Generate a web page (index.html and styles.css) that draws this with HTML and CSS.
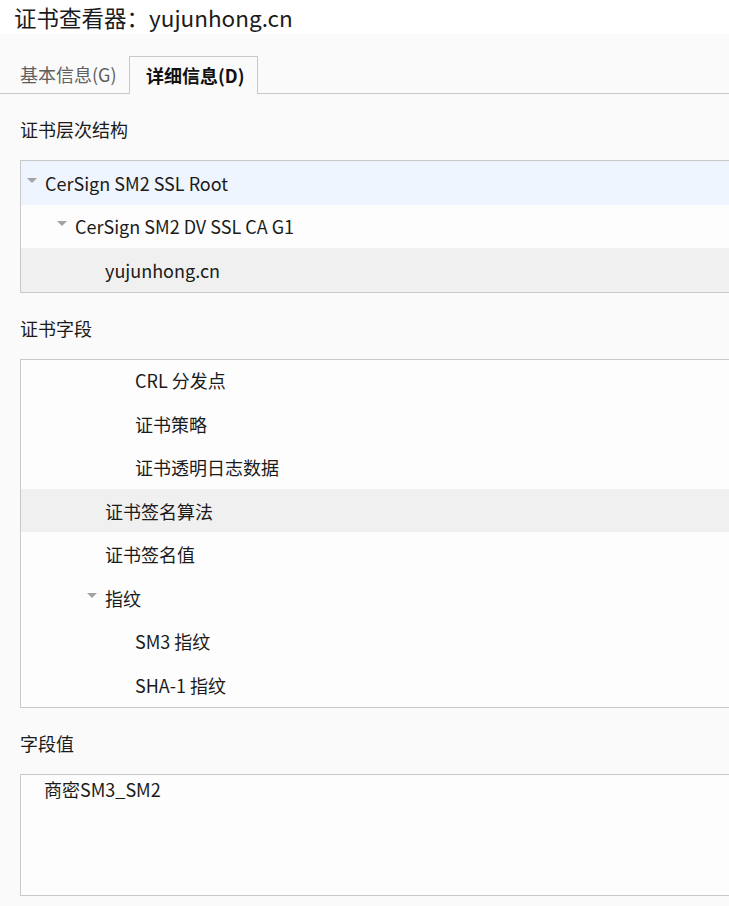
FILE: index.html
```html
<!DOCTYPE html>
<html lang="zh-CN">
<head>
<meta charset="utf-8">
<title>证书查看器</title>
<link rel="stylesheet" href="styles.css">
</head>
<body>
<div class="page">
  <div class="titlebar">证书查看器：yujunhong.cn</div>
  <div class="tabs">
    <div class="tab tab-basic">基本信息(G)</div>
    <div class="tab tab-active">详细信息(D)</div>
  </div>
  <div class="content">
    <div class="label">证书层次结构</div>
    <div class="box tree">
      <div class="row sel lv0"><span class="twisty open"></span><span class="txt">CerSign SM2 SSL Root</span></div>
      <div class="row lv1"><span class="twisty open"></span><span class="txt">CerSign SM2 DV SSL CA G1</span></div>
      <div class="row cur lv2"><span class="twisty"></span><span class="txt">yujunhong.cn</span></div>
    </div>

    <div class="label">证书字段</div>
    <div class="box fields">
      <div class="list">
        <div class="frow lv3"><span class="twisty"></span><span class="txt">CRL 分发点</span></div>
        <div class="frow lv3"><span class="twisty"></span><span class="txt">证书策略</span></div>
        <div class="frow lv3"><span class="twisty"></span><span class="txt">证书透明日志数据</span></div>
        <div class="frow cur lv2"><span class="twisty"></span><span class="txt">证书签名算法</span></div>
        <div class="frow lv2"><span class="twisty"></span><span class="txt">证书签名值</span></div>
        <div class="frow lv2"><span class="twisty open"></span><span class="txt">指纹</span></div>
        <div class="frow lv3"><span class="twisty"></span><span class="txt">SM3 指纹</span></div>
        <div class="frow lv3"><span class="twisty"></span><span class="txt">SHA-1 指纹</span></div>
      </div>
    </div>

    <div class="label">字段值</div>
    <div class="box value">
      <div class="valtext">商密SM3_SM2</div>
    </div>
  </div>
</div>
</body>
</html>
```

FILE: styles.css
```css
html, body {
  margin: 0;
  padding: 0;
  background: #fafafa;
}
.page {
  width: 729px;
  height: 906px;
  overflow: hidden;
  background: #fafafa;
  font-family: "Noto Sans CJK SC", "Noto Sans", sans-serif;
  color: #1b1b1b;
  font-size: 18px;
}
.titlebar {
  height: 34px;
  line-height: 34px;
  background: #ffffff;
  padding-left: 14px;
  font-size: 22.5px;
  color: #1b1b1b;
  white-space: nowrap;
}
.tabs {
  margin-top: 22px;
  display: flex;
  padding-left: 4px;
  border-bottom: 1px solid #c9c9c9;
  height: 37px;
}
.tab {
  box-sizing: border-box;
  height: 37px;
  line-height: 37px;
  white-space: nowrap;
}
.tab-basic {
  width: 125px;
  padding-left: 16px;
  color: #606060;
}
.tab-active {
  width: 129px;
  height: 38px;
  padding-left: 16px;
  border: 1px solid #c9c9c9;
  border-bottom: none;
  background: #fafafa;
  font-weight: bold;
  line-height: 36px;
  color: #111;
}
.content {
  padding-left: 20px;
}
.label {
  margin-top: 21px;
  height: 28px;
  line-height: 28px;
  margin-bottom: 17px;
  white-space: nowrap;
}
.box {
  width: 760px;
  border: 1px solid #c9c9c9;
  border-right: none;
  background: #fdfdfd;
}
.row, .frow {
  display: flex;
  align-items: center;
  white-space: nowrap;
  box-sizing: border-box;
  padding-left: 6px;
}
.row {
  height: 43.67px;
}
.frow {
  height: 43.5px;
}
.sel {
  background: #eff5fe;
}
.cur {
  background: #f0f0f0;
}
.lv1 { padding-left: 36px; }
.lv2 { padding-left: 66px; }
.lv3 { padding-left: 96px; }
.twisty {
  width: 18px;
  height: 10px;
  flex: none;
  position: relative;
}
.twisty.open::before {
  content: "";
  position: absolute;
  left: 0;
  top: 0;
  width: 0;
  height: 0;
  border-left: 5px solid transparent;
  border-right: 5px solid transparent;
  border-top: 5px solid #a3a3a3;
}
.txt {
  line-height: 22px;
}
.fields {
  height: 347px;
  overflow: hidden;
}
.list {
  margin-top: -1.5px;
}
.value {
  height: 120px;
}
.valtext {
  padding-left: 23px;
  padding-top: 2px;
  line-height: 24px;
}
```
